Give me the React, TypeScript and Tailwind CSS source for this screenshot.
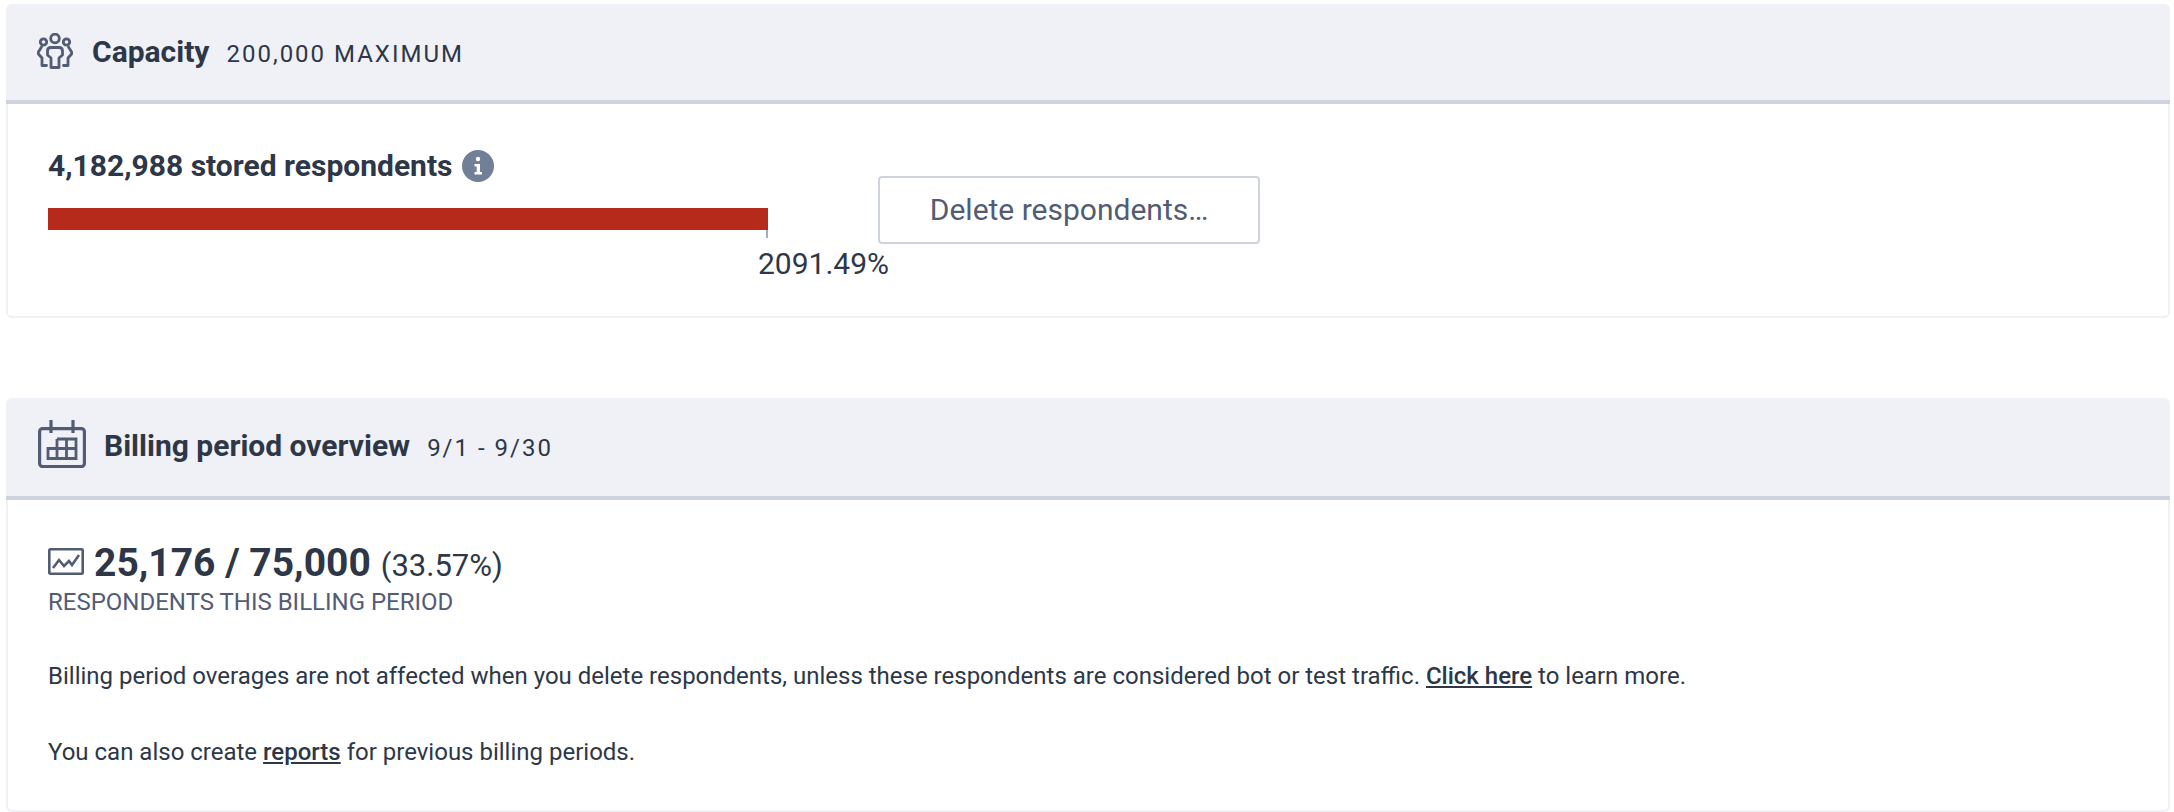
function PeopleIcon() {
  return (
    <svg width="36" height="36" viewBox="0 0 36 36" fill="none" stroke="#525c75" strokeWidth="2.8" strokeLinejoin="round" strokeLinecap="round" className="mb-[2px]">
      <circle cx="18" cy="5.5" r="4.3" />
      <circle cx="6.5" cy="9" r="3.2" />
      <circle cx="29.5" cy="9" r="3.2" />
      <path d="M14 34.5V25L10.5 22V18Q10.5 14.5 14 14.5H22Q25.5 14.5 25.5 18V22L22 25V34.5Z" />
      <path d="M4.5 14L1.4 19V21L5 25V32.5H9.5" />
      <path d="M31.5 14L34.6 19V21L31 25V32.5H26.5" />
    </svg>
  )
}

function CalendarIcon() {
  return (
    <svg width="48" height="48" viewBox="0 0 48 48" fill="none" stroke="#525c75" strokeWidth="3.2" className="mb-[6px]">
      <rect x="1.6" y="8.6" width="44.8" height="38" rx="3" />
      <path d="M13 0V13M35 0V13" />
      <path d="M10 28.5H38V38.5H10ZM19 19H38V28.5M19 19V38.5M28.5 19V38.5" strokeWidth="2.8" />
    </svg>
  )
}

function ChartIcon() {
  return (
    <svg width="36" height="28" viewBox="0 0 36 28" fill="none" stroke="#525c75" strokeWidth="2.6" className="mt-[8px]">
      <rect x="1.3" y="1.3" width="33.4" height="24.4" rx="1" />
      <path d="M5 20L11 12L16 18L21 13L24 17L31 7" />
    </svg>
  )
}

function InfoIcon() {
  return (
    <svg width="32" height="32" viewBox="0 0 32 32">
      <circle cx="16" cy="16" r="16" fill="#718096" />
      <circle cx="16" cy="9" r="2.2" fill="#fff" />
      <path d="M12.5 14H18V22H20V24.5H12.5V22H14.7V16.5H12.5Z" fill="#fff" />
    </svg>
  )
}

export default function App() {
  return (
    <div className="flex h-[812px] w-[2174px] flex-col gap-[80px] bg-white pt-[4px] pl-[6px] pr-[4px] font-[Roboto,sans-serif] text-[#2d3748]">
      <section className="h-[314px] rounded-[6px] border-2 border-t-0 border-[#f0f1f6]">
        <header className="-mx-[2px] flex h-[100px] items-center gap-[19px] rounded-t-[6px] border-b-4 border-[#cfd3dd] bg-[#f0f1f6] pl-[31px]">
          <PeopleIcon />
          <div className="mb-[1px] flex items-baseline gap-[17px]">
            <h2 className="text-[30px] font-bold">Capacity</h2>
            <span className="text-[24px] tracking-[2px]">200,000 MAXIMUM</span>
          </div>
        </header>
        <div className="flex pl-[40px]">
          <div className="relative w-[720px]">
            <div className="flex h-[32px] items-center gap-[10px] mt-[46px] whitespace-nowrap">
              <span className="mb-[2px] text-[30px] font-bold">4,182,988 stored respondents</span>
              <InfoIcon />
            </div>
            <div className="mt-[26px] h-[22px] bg-[#b52a1b]" />
            <div className="absolute right-0 top-[126px] h-[8px] w-[2px] bg-[#a0aec0]" />
            <div className="absolute left-[710px] top-[140px] text-[30px] leading-[40px]">2091.49%</div>
          </div>
          <button className="mt-[72px] ml-[110px] flex h-[68px] w-[382px] items-center justify-center rounded-[4px] border-2 border-[#cfd3dd] pb-[2px] text-[30px] text-[#525c75]">
            Delete respondents…
          </button>
        </div>
      </section>

      <section className="h-[414px] rounded-[6px] border-2 border-t-0 border-[#f0f1f6]">
        <header className="-mx-[2px] flex h-[102px] items-center gap-[18px] rounded-t-[6px] border-b-4 border-[#cfd3dd] bg-[#f0f1f6] pl-[32px]">
          <CalendarIcon />
          <div className="mb-[3px] flex items-baseline gap-[17px]">
            <h2 className="text-[30px] font-bold">Billing period overview</h2>
            <span className="text-[24px] tracking-[2px]">9/1 - 9/30</span>
          </div>
        </header>
        <div className="pl-[40px]">
          <div className="mt-[40px] flex items-start gap-[10px]">
            <ChartIcon />
            <div className="flex items-baseline gap-[10px]">
              <span className="text-[39px] font-bold leading-[46px]">25,176 / 75,000</span>
              <span className="text-[31px] leading-[46px]">(33.57%)</span>
            </div>
          </div>
          <div className="-mt-[1px] text-[24px] leading-[28px] text-[#525c75]">RESPONDENTS THIS BILLING PERIOD</div>
          <p className="mt-[46px] text-[24px] leading-[28px]">
            Billing period overages are not affected when you delete respondents, unless these respondents are considered bot or test traffic.{" "}
            <a className="font-medium underline">Click here</a> to learn more.
          </p>
          <p className="mt-[48px] text-[24px] leading-[28px]">
            You can also create <a className="font-medium underline">reports</a> for previous billing periods.
          </p>
        </div>
      </section>
    </div>
  )
}
